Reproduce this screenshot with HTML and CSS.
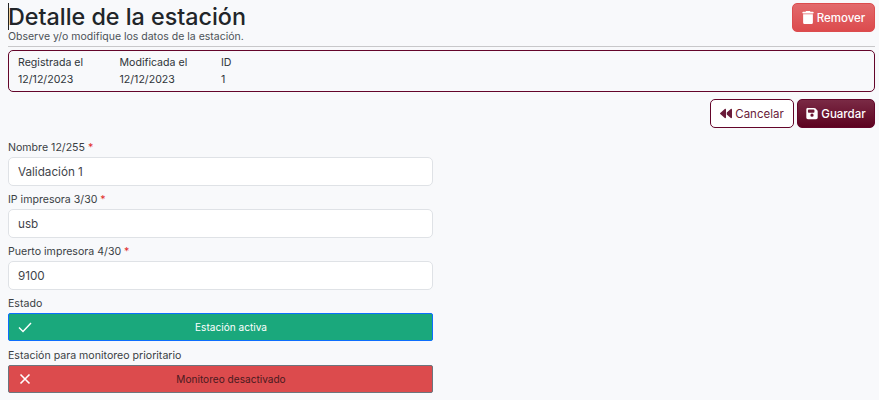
FILE: index.html
```html
<!DOCTYPE html>
<html lang="es">
<head>
<meta charset="utf-8">
<title>Detalle de la estación</title>
<link rel="stylesheet" href="styles.css">
</head>
<body>
<header class="head">
  <div class="head-text">
    <h1 class="title">Detalle de la estación</h1>
    <p class="subtitle">Observe y/o modifique los datos de la estación.</p>
  </div>
  <button class="btn btn-danger" type="button">
    <svg class="ico" viewBox="0 0 448 512"><path fill="currentColor" d="M135 18C140 7 151 0 163 0h122c12 0 23 7 28 18l7 14h96c18 0 32 14 32 32s-14 32-32 32H32C14 96 0 82 0 64s14-32 32-32h96l7-14zM32 128h384v320c0 35-29 64-64 64H96c-35 0-64-29-64-64V128z"/></svg>Remover
  </button>
</header>
<section class="info">
  <div class="info-col info-a"><span>Registrada el</span><span>12/12/2023</span></div>
  <div class="info-col info-b"><span>Modificada el</span><span>12/12/2023</span></div>
  <div class="info-col"><span>ID</span><span>1</span></div>
</section>
<div class="actions">
  <button class="btn btn-outline" type="button">
    <svg class="ico" viewBox="0 0 512 512"><path fill="currentColor" d="M459 446c11 9 26 11 39 5s14-19 14-33V94c0-14-1-27-14-33s-28-4-39 5L288 211v90l171 145zM256 94c0-14-1-27-14-33s-28-4-39 5L11 231c-7 6-11 15-11 25s4 19 11 25l192 165c11 9 26 11 39 5s14-19 14-33V94z"/></svg>Cancelar
  </button>
  <button class="btn btn-primary" type="button">
    <svg class="ico" viewBox="0 0 448 512"><path fill="currentColor" d="M64 32C29 32 0 61 0 96v320c0 35 29 64 64 64h320c35 0 64-29 64-64V173c0-17-7-33-19-45l-74-74c-12-12-28-19-45-19H64zm0 96c0-18 14-32 32-32h192c18 0 32 14 32 32v64c0 18-14 32-32 32H96c-18 0-32-14-32-32v-64zm160 128a64 64 0 1 1 0 128 64 64 0 1 1 0-128z"/></svg>Guardar
  </button>
</div>
<form class="form">
  <div class="field">
    <label class="label">Nombre 12/255 <span class="req">*</span></label>
    <input class="input" type="text" value="Validación 1">
  </div>
  <div class="field">
    <label class="label">IP impresora 3/30 <span class="req">*</span></label>
    <input class="input" type="text" value="usb">
  </div>
  <div class="field">
    <label class="label">Puerto impresora 4/30 <span class="req">*</span></label>
    <input class="input" type="text" value="9100">
  </div>
  <div class="field field-toggle">
    <label class="label">Estado</label>
    <div class="toggle toggle-on">
      <svg class="toggle-ico" viewBox="0 0 14 14"><path d="M1 7.5 5 11.5 13 3" fill="none" stroke="currentColor" stroke-width="1.4"/></svg>
      <span>Estación activa</span>
    </div>
  </div>
  <div class="field field-toggle">
    <label class="label">Estación para monitoreo prioritario</label>
    <div class="toggle toggle-off">
      <svg class="toggle-ico" viewBox="0 0 14 14"><path d="M2.5 2.5l9 9M11.5 2.5l-9 9" fill="none" stroke="currentColor" stroke-width="1.6"/></svg>
      <span>Monitoreo desactivado</span>
    </div>
  </div>
</form>
</body>
</html>
```
FILE: styles.css
```css
* { box-sizing: border-box; }
html, body { height: 100%; }
body {
  margin: 0;
  padding: 3px 4px 0 8px;
  background: #f8f9fb;
  color: #212529;
  font-family: Inter, "Noto Sans", sans-serif;
  font-size: 11px;
  overflow: hidden;
}
.head {
  display: flex;
  justify-content: space-between;
  align-items: flex-start;
  height: 44px;
  border-bottom: 1px solid #c8c8ca;
}
.head-text { position: relative; }
.head-text::before {
  content: "";
  position: absolute;
  left: 0;
  top: 0;
  width: 1px;
  height: 27px;
  background: #222;
}
.title {
  margin: 0;
  font-size: 23.3px;
  line-height: 28px;
  font-weight: 500;
  color: #212529;
}
.subtitle {
  margin: 0;
  font-size: 10.5px;
  line-height: 12px;
  color: #4b5157;
}
.btn {
  display: inline-flex;
  align-items: center;
  justify-content: center;
  gap: 3px;
  height: 29px;
  padding: 0 9px;
  border-radius: 5px;
  font-family: inherit;
  font-size: 11.5px;
  font-weight: 500;
}
.ico { width: 12px; height: 13px; flex: none; }
.btn-danger {
  width: 83px;
  color: #fff;
  border: 1px solid #dc4c4e;
  background: linear-gradient(#e26a6c, #dc4b4d);
}
.info {
  display: flex;
  margin-top: 3px;
  height: 42px;
  padding: 6px 9px 0;
  border: 1px solid #64052a;
  border-radius: 5px;
}
.info-col {
  display: flex;
  flex-direction: column;
  gap: 5px;
  line-height: 12px;
  font-size: 10.6px;
  color: #2f3439;
}
.info-a, .info-b { width: 101.5px; }
.actions {
  display: flex;
  justify-content: flex-end;
  gap: 3px;
  margin-top: 7px;
}
.btn-outline {
  width: 84px;
  color: #6a1b3a;
  font-weight: 400;
  background: #fff;
  border: 1px solid #64052a;
}
.btn-primary {
  width: 78px;
  color: #fff;
  border: 1px solid #64052a;
  background: linear-gradient(#7a2a45, #5d0320);
}
.form {
  display: flex;
  flex-direction: column;
  width: 425px;
  margin-top: 14px;
}
.field { margin-bottom: 8px; }
.field-toggle { margin-bottom: 9px; }
.label {
  display: block;
  height: 15px;
  line-height: 11px;
  font-size: 10.6px;
  color: #3a3f44;
}
.req { color: #e02b2b; }
.input {
  display: block;
  width: 100%;
  height: 29px;
  padding: 0 9px;
  border: 1px solid #dfe2e6;
  border-radius: 5px;
  background: #fff;
  color: #3f444a;
  font-family: inherit;
  font-size: 11.7px;
}
.toggle {
  display: flex;
  align-items: center;
  position: relative;
  height: 28px;
  padding-left: 21px;
  border-radius: 2px;
  font-size: 10.1px;
}
.toggle span { flex: 1; text-align: center; }
.toggle-ico {
  position: absolute;
  left: 9px;
  top: 6px;
  width: 14px;
  height: 14px;
  color: #fff;
}
.toggle-on {
  background: #1aa87c;
  border: 1px solid #0d6efd;
  color: #fff;
}
.toggle-off {
  background: #dc4b4d;
  border: 1px solid #6c757d;
  color: #4a1a20;
}
```
